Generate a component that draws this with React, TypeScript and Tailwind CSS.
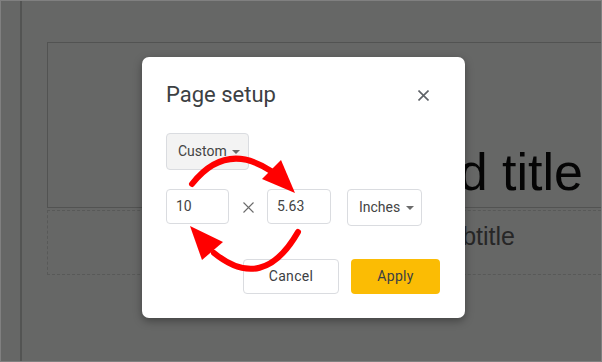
import React from "react";

function Caret() {
  return (
    <span className="inline-block w-0 h-0 border-x-[4px] border-x-transparent border-t-[4px] border-t-[#6b6b6b]" />
  );
}

export default function App() {
  return (
    <div className="relative w-[602px] h-[362px] overflow-hidden bg-[#666766] border border-[#808080]">
      {/* background app */}
      <div className="flex h-full">
        <div className="w-[21px] h-full border-r-2 border-[#535453] shrink-0" />
        <div className="flex-1 flex flex-col pl-[25px] pt-[41px]">
          <div className="h-[166px] border border-r-0 border-[#525352] flex justify-end pr-[18px] pt-[103px]">
            <span
              className="text-[52px] leading-none text-[#050505] whitespace-nowrap"
              style={{ fontFamily: '"Liberation Sans", Arial, sans-serif' }}
            >
              Click to add title
            </span>
          </div>
          <div className="mt-[2px] h-[65px] border border-dashed border-r-0 border-[#585958] flex justify-end pr-[86px] pt-[13px]">
            <span
              className="text-[25px] leading-none text-[#262626] whitespace-nowrap"
              style={{ fontFamily: '"Liberation Sans", Arial, sans-serif' }}
            >
              Click to add subtitle
            </span>
          </div>
        </div>
      </div>

      {/* dialog */}
      <div
        className="absolute left-[141px] top-[56px] w-[323px] bg-white rounded-[7px] shadow-[0_3px_8px_rgba(0,0,0,0.35)] px-[24px] pt-[24px] pb-[24px] text-[#3c4043]"
        style={{ fontFamily: 'Roboto, "Noto Sans", Arial, sans-serif' }}
      >
        <div className="flex items-center justify-between h-[28px]">
          <span className="text-[22px] leading-[28px] text-[#3c4043]">Page setup</span>
          <svg width="11" height="11" viewBox="0 0 11 11" className="mr-[12px]">
            <path d="M0.5 0.5 L10.5 10.5 M10.5 0.5 L0.5 10.5" stroke="#5f6368" strokeWidth="1.6" />
          </svg>
        </div>

        <div className="mt-[24px] flex">
          <div className="h-[37px] w-[83px] bg-[#f3f3f3] border border-[#dadce0] rounded-[4px] flex items-center pl-[11px] pr-[8px] justify-between">
            <span className="text-[14px] text-[#444]">Custom</span>
            <Caret />
          </div>
        </div>

        <div className="mt-[19px] flex items-start">
          <div className="h-[35px] w-[63px] border border-[#dadce0] rounded-[4px] flex items-center pl-[9px]">
            <span className="text-[14px] text-[#444]">10</span>
          </div>
          <svg width="11" height="11" viewBox="0 0 11 11" className="ml-[14px] mr-[13px] mt-[13px]">
            <path d="M0.5 0.5 L10.5 10.5 M10.5 0.5 L0.5 10.5" stroke="#6b6b6b" strokeWidth="1.1" />
          </svg>
          <div className="h-[35px] w-[64px] border border-[#dadce0] rounded-[4px] flex items-center pl-[9px]">
            <span className="text-[14px] text-[#444]">5.63</span>
          </div>
          <div className="ml-[16px] h-[37px] w-[75px] border border-[#dadce0] rounded-[4px] flex items-center justify-between pl-[11px] pr-[7px]">
            <span className="text-[14px] text-[#444]">Inches</span>
            <Caret />
          </div>
        </div>

        <div className="mt-[33px] flex justify-end gap-[12px] pr-[1px]">
          <div className="h-[35px] w-[96px] border border-[#dadce0] rounded-[4px] flex items-center justify-center">
            <span className="text-[14px] font-normal tracking-[0.3px] text-[#3c4043]">Cancel</span>
          </div>
          <div className="h-[35px] w-[89px] bg-[#fbbc04] rounded-[4px] flex items-center justify-center">
            <span className="text-[14px] font-normal tracking-[0.3px] text-[#3c4043]">Apply</span>
          </div>
        </div>
      </div>

      {/* red arrows */}
      <svg className="absolute left-0 top-0 pointer-events-none" width="602" height="362" viewBox="0 0 602 362">
        <path d="M191 183 Q225 140 270 170" fill="none" stroke="#ff0000" strokeWidth="6" strokeLinecap="round" />
        <polygon points="294,192 261,178 280,159" fill="#ff0000" />
        <path d="M297 231 Q262 292 213 252" fill="none" stroke="#ff0000" strokeWidth="6" strokeLinecap="round" />
        <polygon points="189,225 201,259 222,241" fill="#ff0000" />
      </svg>
    </div>
  );
}
